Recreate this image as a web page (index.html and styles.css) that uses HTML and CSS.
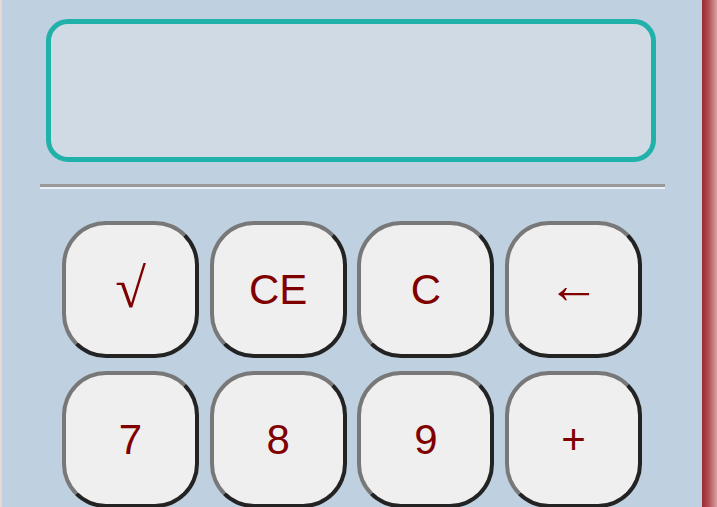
FILE: index.html
```html
<!DOCTYPE html>
<html>
<head>
<meta charset="utf-8">
<link rel="stylesheet" href="styles.css">
</head>
<body>
<div class="edge-left"></div>
<div class="calc">
  <div class="display"></div>
  <hr class="divider">
  <div class="keys">
    <button class="key sqrt">√</button>
    <button class="key">CE</button>
    <button class="key">C</button>
    <button class="key arrow">←</button>
    <button class="key">7</button>
    <button class="key">8</button>
    <button class="key">9</button>
    <button class="key">+</button>
  </div>
</div>
<div class="edge-right"></div>
</body>
</html>
```
FILE: styles.css
```css
html, body {
  margin: 0;
  padding: 0;
  height: 100%;
  overflow: hidden;
}
body {
  display: flex;
  background: #bfd0e0;
  font-family: "Liberation Sans", Arial, sans-serif;
}
.edge-left {
  width: 2px;
  flex: none;
  background: #e6d8d6;
}
.edge-right {
  flex: 1;
  background: linear-gradient(to right, #9a2a30, #b04a50 40%, #d8a2a4);
}
.calc {
  width: 700px;
  flex: none;
  background: #bfd0e0;
  padding-top: 19px;
  box-sizing: border-box;
}
.display {
  margin-left: 44px;
  width: 610px;
  height: 143px;
  box-sizing: border-box;
  border: 5px solid #20b2aa;
  border-radius: 22px;
  background: #cfdae4;
}
.divider {
  margin: 22px 0 0 38px;
  width: 625px;
  height: 0;
  border: none;
  border-top: 3px solid #999;
  border-bottom: 2px solid #e9eff5;
}
.keys {
  margin: 32px 0 0 60px;
  display: grid;
  grid-template-columns: repeat(4, 137px);
  grid-auto-rows: 137px;
  column-gap: 10.67px;
  row-gap: 13px;
}
.key {
  box-sizing: border-box;
  border: 4px solid;
  border-color: #787878 #232323 #232323 #787878;
  border-radius: 44px;
  background: #efefef;
  color: #800000;
  font-family: "Liberation Sans", Arial, sans-serif;
  font-size: 42px;
  line-height: 1;
  padding: 0;
  display: flex;
  align-items: center;
  justify-content: center;
}
.key.sqrt {
  font-family: "Liberation Serif", "Times New Roman", serif;
  font-size: 56px;
  padding-bottom: 4px;
}
.key.arrow {
  font-family: "Liberation Serif", "Times New Roman", serif;
  font-size: 52px;
  padding-bottom: 8px;
}
```
